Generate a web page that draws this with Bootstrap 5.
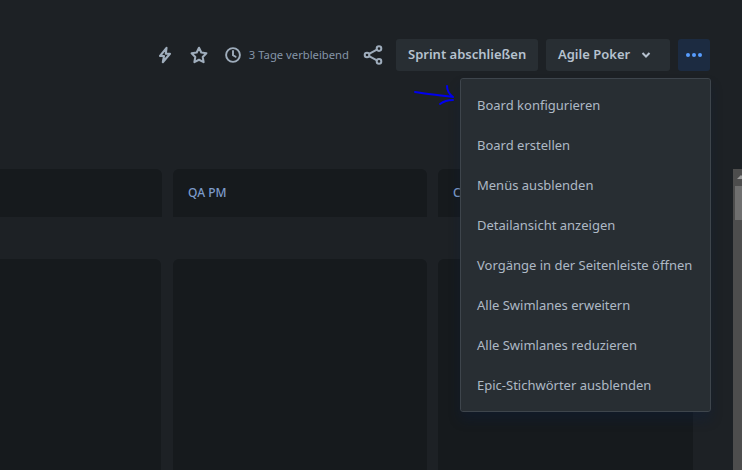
<!DOCTYPE html>
<html lang="de">
<head>
  <meta charset="UTF-8" />
  <meta name="viewport" content="width=device-width, initial-scale=1" />
  <title>Board</title>
  <link href="https://cdn.jsdelivr.net/npm/bootstrap@5.3.0/dist/css/bootstrap.min.css" rel="stylesheet" />
  <style>
    html, body { height: 100%; }
    body {
      background: #1d2125;
      font-family: "Noto Sans", sans-serif;
      overflow: hidden;
    }
    .board-page { height: 470px; position: relative; overflow: hidden; }
    .top-bar { height: 169px; padding: 39px 32px 0 0; }
    .tool-row { height: 32px; }
    .tool-icon { color: #9fadbc; display: block; }
    .star-icon { margin-left: 18px; }
    .clock-icon { margin-left: 17px; }
    .share-icon { margin-left: 14px; }
    .days-left { font-size: 11.25px; color: #8595a8; margin-left: 8px; }
    .jira-btn {
      height: 32px;
      padding: 0 12px;
      background: #282e33;
      color: #b6c2cf;
      font-size: 13px;
      font-weight: 600;
      border: 0;
      border-radius: 3px;
    }
    .jira-btn:hover { background: #282e33; color: #b6c2cf; }
    .sprint-btn { margin-left: 13px; width: 142px; white-space: nowrap; }
    .poker-btn { width: 124px; white-space: nowrap; }
    .poker-btn svg { margin-left: 11px; }
    .more-btn { width: 32px; padding: 0; background: #1c2b41; color: #579dff; }
    .more-btn:hover { background: #1c2b41; color: #579dff; }
    .lane-grid {
      display: grid;
      grid-template-columns: 254px 254px 255px;
      column-gap: 11px;
      margin-left: -92px;
    }
    .lane-head {
      height: 48px;
      background: #161a1d;
      border-radius: 6px 6px 0 0;
      padding: 16px 15px;
      color: #7d9ccb;
      font-size: 12px;
      font-weight: 500;
      line-height: 16px;
    }
    .lane-body {
      height: 211px;
      margin-top: 42px;
      background: #161a1d;
      border-radius: 6px 6px 0 0;
    }
    .lane-body-first { margin-right: 1px; }
    .action-menu {
      --bs-dropdown-bg: #282e33;
      --bs-dropdown-border-color: #3e454c;
      --bs-dropdown-border-radius: 3px;
      --bs-dropdown-padding-y: 6px;
      --bs-dropdown-link-color: #aeb9c5;
      --bs-dropdown-link-hover-color: #aeb9c5;
      --bs-dropdown-link-hover-bg: #282e33;
      --bs-dropdown-item-padding-x: 16px;
      --bs-dropdown-item-padding-y: 0;
      width: 251px;
      top: 39px;
      right: -1px;
      box-shadow: 0 8px 12px rgba(9, 30, 66, .3);
    }
    .action-menu .dropdown-item { font-size: 13px; line-height: 40px; }
    .menu-anchor { position: relative; }
    .scroll-rail {
      position: absolute;
      right: 0;
      top: 169px;
      bottom: 0;
      width: 9px;
      overflow: hidden;
      background: #4d4d4d;
    }
    .scroll-arrow {
      position: absolute;
      left: 4px;
      top: 6px;
      border-left: 4px solid transparent;
      border-right: 4px solid transparent;
      border-bottom: 4px solid #9b9b9b;
    }
    .scroll-thumb { position: absolute; left: 2px; right: 0; top: 17px; height: 34px; background: #6f6f6f; }
    .hand-arrow { position: absolute; left: 412px; top: 84px; }
  </style>
</head>
<body>
  <div class="board-page">
    <div class="top-bar d-flex justify-content-end align-items-start">
      <div class="tool-row d-flex align-items-center">
        <svg class="tool-icon" width="14" height="18" viewBox="0 0 14 18" fill="none" stroke="currentColor" stroke-width="2.1" stroke-linejoin="round"><path d="M8.5 1.8 2 10h4l-1.2 6.2L12 7.8H7.8z"/></svg>
        <svg class="tool-icon star-icon" width="18" height="18" viewBox="0 0 18 18" fill="none" stroke="currentColor" stroke-width="2.1" stroke-linejoin="round"><path d="M9 1.8l2.3 4.7 5.1.7-3.7 3.7.9 5.2L9 13.7l-4.6 2.4.9-5.2-3.7-3.7 5.1-.7z"/></svg>
        <svg class="tool-icon clock-icon" width="16" height="16" viewBox="0 0 16 16" fill="none" stroke="currentColor" stroke-width="1.9"><circle cx="8" cy="8" r="6.9"/><path d="M8 4v4.2l2.6 1.6" stroke-linecap="round"/></svg>
        <span class="days-left">3 Tage verbleibend</span>
        <svg class="tool-icon share-icon" width="20" height="20" viewBox="0 0 20 20" fill="none" stroke="currentColor" stroke-width="2"><circle cx="4" cy="10" r="2.3"/><circle cx="16" cy="3.6" r="2.3"/><circle cx="16" cy="16.4" r="2.3"/><path d="M6.1 8.9 13.9 4.7M6.1 11.1l7.8 4.2"/></svg>
      </div>
      <button class="btn jira-btn sprint-btn" type="button">Sprint abschließen</button>
      <button class="btn jira-btn poker-btn ms-2 d-flex align-items-center" type="button">Agile Poker
        <svg width="10" height="8" viewBox="0 0 10 8" fill="none" stroke="currentColor" stroke-width="2"><path d="M1.5 2 5 5.5 8.5 2"/></svg>
      </button>
      <div class="dropdown menu-anchor ms-2">
        <button class="btn jira-btn more-btn d-flex align-items-center justify-content-center" type="button" aria-expanded="true">
          <svg width="18" height="6" viewBox="0 0 18 6" fill="currentColor"><circle cx="3" cy="3" r="2"/><circle cx="9" cy="3" r="2"/><circle cx="15" cy="3" r="2"/></svg>
        </button>
        <ul class="dropdown-menu show action-menu">
          <li><a class="dropdown-item" href="#">Board konfigurieren</a></li>
          <li><a class="dropdown-item" href="#">Board erstellen</a></li>
          <li><a class="dropdown-item" href="#">Menüs ausblenden</a></li>
          <li><a class="dropdown-item" href="#">Detailansicht anzeigen</a></li>
          <li><a class="dropdown-item" href="#">Vorgänge in der Seitenleiste öffnen</a></li>
          <li><a class="dropdown-item" href="#">Alle Swimlanes erweitern</a></li>
          <li><a class="dropdown-item" href="#">Alle Swimlanes reduzieren</a></li>
          <li><a class="dropdown-item" href="#">Epic-Stichwörter ausblenden</a></li>
        </ul>
      </div>
    </div>
    <div class="lane-grid">
      <div class="lane-head"></div>
      <div class="lane-head">QA PM</div>
      <div class="lane-head">C</div>
      <div class="lane-body lane-body-first"></div>
      <div class="lane-body"></div>
      <div class="lane-body"></div>
    </div>
    <div class="scroll-rail"><div class="scroll-arrow"></div><div class="scroll-thumb"></div></div>
    <svg class="hand-arrow" width="48" height="22" viewBox="0 0 48 22" fill="none" stroke="#0000ee" stroke-width="2" stroke-linecap="round"><path d="M3 8C14 10 28 11 41 13M35 2c0 4 2 8 6 11M28 20c4-3 8-4 13-4"/></svg>
  </div>
  <script src="https://cdn.jsdelivr.net/npm/bootstrap@5.3.0/dist/js/bootstrap.bundle.min.js"></script>
</body>
</html>
